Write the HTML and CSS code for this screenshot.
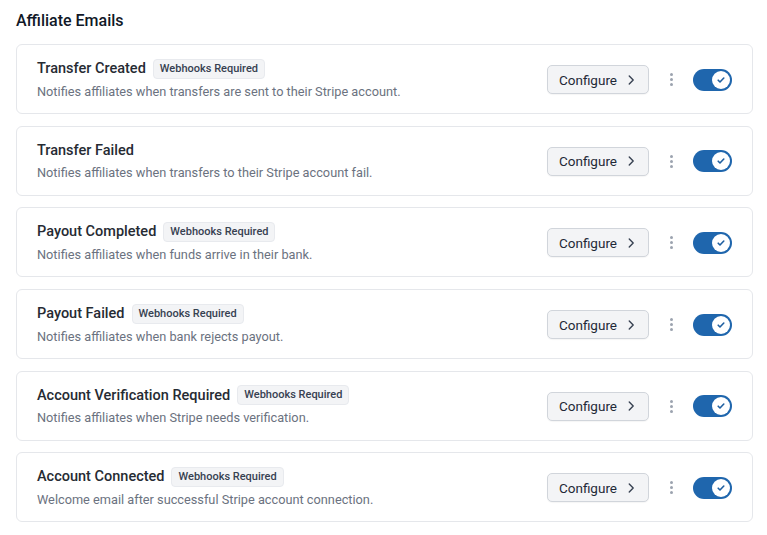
FILE: index.html
```html
<!DOCTYPE html>
<html lang="en">
<head>
    <meta charset="UTF-8">
    <title>Affiliate Emails</title>
    <link rel="stylesheet" href="styles.css">
</head>
<body>
    <h2 class="section-title">Affiliate Emails</h2>

    <div class="email-list">
        <div class="email-card">
            <div class="email-info">
                <div class="email-head">
                    <span class="email-name">Transfer Created</span>
                    <span class="badge">Webhooks Required</span>
                </div>
                <p class="email-desc">Notifies affiliates when transfers are sent to their Stripe account.</p>
            </div>
            <div class="email-actions">
                <button class="configure-btn">Configure <svg width="14" height="14" viewBox="0 0 16 16"><path d="M6 3.5l4.5 4.5L6 12.5" fill="none" stroke="currentColor" stroke-width="1.6" stroke-linecap="round" stroke-linejoin="round"/></svg></button>
                <span class="kebab"><i></i><i></i><i></i></span>
                <span class="toggle"><span class="knob"><svg width="10" height="10" viewBox="0 0 10 10"><path d="M2.2 5.2l1.8 1.8 3.8-4" fill="none" stroke="#1f5fa0" stroke-width="1.6" stroke-linecap="round" stroke-linejoin="round"/></svg></span></span>
            </div>
        </div>

        <div class="email-card">
            <div class="email-info">
                <div class="email-head">
                    <span class="email-name">Transfer Failed</span>
                </div>
                <p class="email-desc">Notifies affiliates when transfers to their Stripe account fail.</p>
            </div>
            <div class="email-actions">
                <button class="configure-btn">Configure <svg width="14" height="14" viewBox="0 0 16 16"><path d="M6 3.5l4.5 4.5L6 12.5" fill="none" stroke="currentColor" stroke-width="1.6" stroke-linecap="round" stroke-linejoin="round"/></svg></button>
                <span class="kebab"><i></i><i></i><i></i></span>
                <span class="toggle"><span class="knob"><svg width="10" height="10" viewBox="0 0 10 10"><path d="M2.2 5.2l1.8 1.8 3.8-4" fill="none" stroke="#1f5fa0" stroke-width="1.6" stroke-linecap="round" stroke-linejoin="round"/></svg></span></span>
            </div>
        </div>

        <div class="email-card">
            <div class="email-info">
                <div class="email-head">
                    <span class="email-name">Payout Completed</span>
                    <span class="badge">Webhooks Required</span>
                </div>
                <p class="email-desc">Notifies affiliates when funds arrive in their bank.</p>
            </div>
            <div class="email-actions">
                <button class="configure-btn">Configure <svg width="14" height="14" viewBox="0 0 16 16"><path d="M6 3.5l4.5 4.5L6 12.5" fill="none" stroke="currentColor" stroke-width="1.6" stroke-linecap="round" stroke-linejoin="round"/></svg></button>
                <span class="kebab"><i></i><i></i><i></i></span>
                <span class="toggle"><span class="knob"><svg width="10" height="10" viewBox="0 0 10 10"><path d="M2.2 5.2l1.8 1.8 3.8-4" fill="none" stroke="#1f5fa0" stroke-width="1.6" stroke-linecap="round" stroke-linejoin="round"/></svg></span></span>
            </div>
        </div>

        <div class="email-card">
            <div class="email-info">
                <div class="email-head">
                    <span class="email-name">Payout Failed</span>
                    <span class="badge">Webhooks Required</span>
                </div>
                <p class="email-desc">Notifies affiliates when bank rejects payout.</p>
            </div>
            <div class="email-actions">
                <button class="configure-btn">Configure <svg width="14" height="14" viewBox="0 0 16 16"><path d="M6 3.5l4.5 4.5L6 12.5" fill="none" stroke="currentColor" stroke-width="1.6" stroke-linecap="round" stroke-linejoin="round"/></svg></button>
                <span class="kebab"><i></i><i></i><i></i></span>
                <span class="toggle"><span class="knob"><svg width="10" height="10" viewBox="0 0 10 10"><path d="M2.2 5.2l1.8 1.8 3.8-4" fill="none" stroke="#1f5fa0" stroke-width="1.6" stroke-linecap="round" stroke-linejoin="round"/></svg></span></span>
            </div>
        </div>

        <div class="email-card">
            <div class="email-info">
                <div class="email-head">
                    <span class="email-name">Account Verification Required</span>
                    <span class="badge">Webhooks Required</span>
                </div>
                <p class="email-desc">Notifies affiliates when Stripe needs verification.</p>
            </div>
            <div class="email-actions">
                <button class="configure-btn">Configure <svg width="14" height="14" viewBox="0 0 16 16"><path d="M6 3.5l4.5 4.5L6 12.5" fill="none" stroke="currentColor" stroke-width="1.6" stroke-linecap="round" stroke-linejoin="round"/></svg></button>
                <span class="kebab"><i></i><i></i><i></i></span>
                <span class="toggle"><span class="knob"><svg width="10" height="10" viewBox="0 0 10 10"><path d="M2.2 5.2l1.8 1.8 3.8-4" fill="none" stroke="#1f5fa0" stroke-width="1.6" stroke-linecap="round" stroke-linejoin="round"/></svg></span></span>
            </div>
        </div>

        <div class="email-card">
            <div class="email-info">
                <div class="email-head">
                    <span class="email-name">Account Connected</span>
                    <span class="badge">Webhooks Required</span>
                </div>
                <p class="email-desc">Welcome email after successful Stripe account connection.</p>
            </div>
            <div class="email-actions">
                <button class="configure-btn">Configure <svg width="14" height="14" viewBox="0 0 16 16"><path d="M6 3.5l4.5 4.5L6 12.5" fill="none" stroke="currentColor" stroke-width="1.6" stroke-linecap="round" stroke-linejoin="round"/></svg></button>
                <span class="kebab"><i></i><i></i><i></i></span>
                <span class="toggle"><span class="knob"><svg width="10" height="10" viewBox="0 0 10 10"><path d="M2.2 5.2l1.8 1.8 3.8-4" fill="none" stroke="#1f5fa0" stroke-width="1.6" stroke-linecap="round" stroke-linejoin="round"/></svg></span></span>
            </div>
        </div>
    </div>
</body>
</html>
```

FILE: styles.css
```css
body {
    margin: 0;
    padding: 0 14px 0 16px;
    font-family: 'Roboto', 'Noto Sans', sans-serif;
    background: #ffffff;
    color: #1f2937;
}

.section-title {
    margin: 0;
    padding-top: 11px;
    height: 33px;
    font-size: 16px;
    font-weight: 500;
    line-height: 20px;
    color: #111827;
}

.email-list {
    display: flex;
    flex-direction: column;
    gap: 11.7px;
}

.email-card {
    display: flex;
    align-items: center;
    justify-content: space-between;
    height: 70px;
    box-sizing: border-box;
    padding: 1px 20px 0;
    border: 1px solid #e5e7eb;
    border-radius: 6px;
    background: #fff;
}

.email-head {
    display: flex;
    align-items: center;
    gap: 7px;
    height: 20px;
}

.email-name {
    font-size: 14.5px;
    font-weight: 500;
    color: #262b33;
}

.badge {
    font-size: 11px;
    font-weight: 500;
    color: #374151;
    background: #f3f4f6;
    border: 1px solid #e8eaee;
    border-radius: 4px;
    padding: 2px 6px;
    line-height: 14px;
}

.email-desc {
    margin: 4px 0 0;
    font-size: 12.75px;
    color: #6b7280;
    line-height: 18px;
}

.email-actions {
    display: flex;
    align-items: center;
}

.configure-btn {
    display: flex;
    align-items: center;
    gap: 7px;
    height: 29px;
    padding: 0 10px 0 11px;
    font-family: inherit;
    font-size: 13.5px;
    font-weight: 400;
    color: #1f2937;
    background: #f3f4f6;
    border: 1px solid #d1d5db;
    border-radius: 5px;
    box-shadow: 0 1px 1px rgba(0, 0, 0, 0.04);
    cursor: pointer;
}

.configure-btn svg {
    color: #374151;
}

.kebab {
    display: flex;
    flex-direction: column;
    gap: 2px;
    margin: 0 20px 0 21px;
}

.kebab i {
    display: block;
    width: 3px;
    height: 3px;
    border-radius: 50%;
    background: #9ca3af;
}

.toggle {
    display: flex;
    align-items: center;
    justify-content: flex-end;
    width: 39px;
    height: 22px;
    box-sizing: border-box;
    padding: 2px;
    border-radius: 11px;
    background: #1f66ad;
}

.knob {
    display: flex;
    align-items: center;
    justify-content: center;
    width: 18px;
    height: 18px;
    border-radius: 50%;
    background: #fff;
}
```
